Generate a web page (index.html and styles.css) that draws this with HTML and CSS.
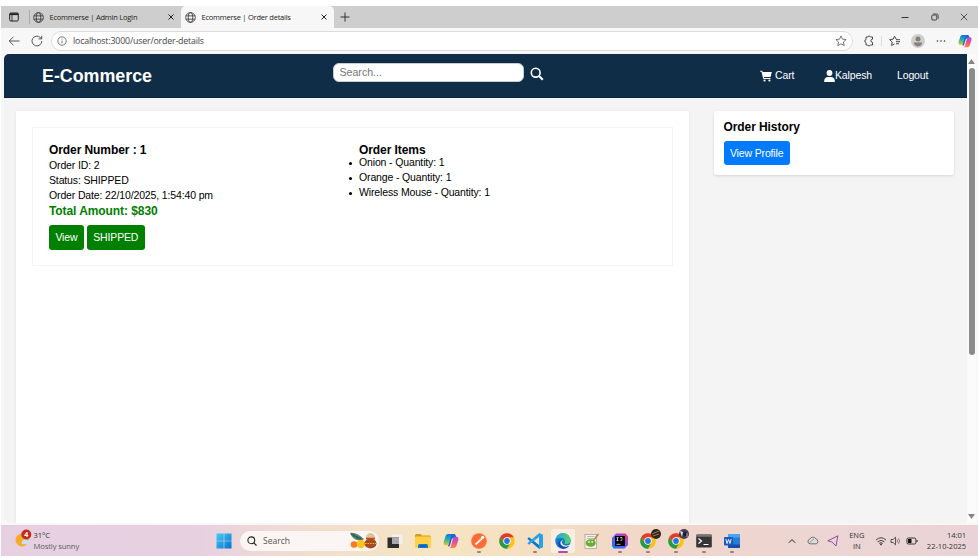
FILE: index.html
```html
<!DOCTYPE html>
<html lang="en">
<head>
<meta charset="utf-8">
<title>Ecommerse | Order details</title>
<link rel="stylesheet" href="styles.css">
</head>
<body>
<svg class="defs" width="0" height="0">
  <defs>
    <linearGradient id="win" x1="0" y1="0" x2="1" y2="1"><stop offset="0" stop-color="#45ccf8"/><stop offset="1" stop-color="#0672cf"/></linearGradient>
    <linearGradient id="copA" x1="0" y1="0" x2="0" y2="1"><stop offset="0" stop-color="#176fe8"/><stop offset=".5" stop-color="#21b5a5"/><stop offset="1" stop-color="#f3c51d"/></linearGradient>
    <linearGradient id="copB" x1="0" y1="0" x2="0" y2="1"><stop offset="0" stop-color="#a34bea"/><stop offset=".5" stop-color="#ee4d91"/><stop offset="1" stop-color="#ff8a43"/></linearGradient>
    <linearGradient id="edgeTop" x1="0" y1="0" x2="1" y2="0"><stop offset="0" stop-color="#229fe0"/><stop offset="1" stop-color="#59d568"/></linearGradient>
    <linearGradient id="ij" x1="0" y1="1" x2="1" y2="0"><stop offset="0" stop-color="#087cfa"/><stop offset=".5" stop-color="#6b57ff"/><stop offset="1" stop-color="#fe2e6d"/></linearGradient>
    <symbol id="globe" viewBox="0 0 12 12"><g fill="none" stroke="#333" stroke-width=".9"><circle cx="6" cy="6" r="5.300"/><ellipse cx="6" cy="6" rx="2.400" ry="5.300"/><path d="M1.200 4.200h9.600M1.200 7.800h9.600"/></g></symbol>
    <symbol id="close" viewBox="0 0 8 8"><path d="M1.500 1.500l5 5M6.500 1.500l-5 5" stroke="#222" stroke-width="1" fill="none"/></symbol>
    <symbol id="copilot" viewBox="0 0 16 16">
      <path d="M5.500 1H11c1 0 1.500.7 1.700 1.500L13.300 5H10.600C9.500 5 9 5.500 8.700 6.600L7 12.200C6.700 13 6 13.500 5.200 13.500" fill="#1765d8"/>
      <path d="M5.200 1H10C8.800 1 8.300 2 8 3L5.900 10.700C5.600 11.700 5 12.300 4 12.300H2.500C.8 12.300.2 10.800.7 9L2.600 3C3 1.700 3.900 1 5.200 1z" fill="url(#copA)"/>
      <path d="M10.800 15H6C7.200 15 7.700 14 8 13L10.100 5.300C10.400 4.300 11 3.700 12 3.700H13.500C15.200 3.700 15.800 5.200 15.300 7L13.400 13C13 14.300 12.100 15 10.800 15z" fill="url(#copB)"/>
    </symbol>
    <symbol id="chrome" viewBox="0 0 16 16">
      <circle cx="8" cy="8" r="7.800" fill="#fbc116"/>
      <path d="M1.250 4.100A7.800 7.800 0 0 0 8 15.800L11.200 9.900 8 8 4.800 9.900z" fill="#249b49"/>
      <path d="M1.250 4.100A7.800 7.800 0 0 1 14.750 4.250H8L4.700 9z" fill="#e33b2e"/>
      <circle cx="8" cy="8" r="3.700" fill="#fff"/><circle cx="8" cy="8" r="2.900" fill="#2675e8"/>
    </symbol>
  </defs>
</svg>

<div class="screen">
  <div class="tabstrip">
    <svg class="tab-menu" viewBox="0 0 10 10"><rect x=".7" y="1" width="8.600" height="8" rx="1.200" fill="none" stroke="#222"/><path d="M.7 2.200h8.600" stroke="#222" stroke-width="1.800"/><path d="M3 2v7" stroke="#222" stroke-width=".8"/></svg>
    <div class="tab tab-first">
      <svg class="globe"><use href="#globe"/></svg><span class="tab-title">Ecommerse | Admin LogIn</span><svg class="close"><use href="#close"/></svg>
    </div>
    <div class="tab tab-active">
      <svg class="globe"><use href="#globe"/></svg><span class="tab-title">Ecommerse | Order details</span><svg class="close"><use href="#close"/></svg>
    </div>
    <svg class="new-tab" viewBox="0 0 10 10"><path d="M5 .5v9M.5 5h9" stroke="#333" fill="none"/></svg>
    <div class="window-controls">
      <svg viewBox="0 0 8 8"><path d="M.5 4.500h7" stroke="#333"/></svg>
      <svg viewBox="0 0 8 8"><rect x=".8" y="2" width="5" height="5" rx="1" fill="none" stroke="#333" stroke-width=".9"/><path d="M2.200 1h3.500a1.500 1.500 0 0 1 1.500 1.500v3.300" fill="none" stroke="#333" stroke-width=".8"/></svg>
      <svg viewBox="0 0 8 8"><path d="M.8.8l6.400 6.400M7.200.8L.8 7.200" stroke="#333" stroke-width=".8"/></svg>
    </div>
  </div>

  <div class="toolbar">
    <svg class="back" viewBox="0 0 12 12"><path d="M11.500 6H1.200M5.500 1.700L1.200 6l4.300 4.300" fill="none" stroke="#444" stroke-width=".9"/></svg>
    <svg class="reload" viewBox="0 0 12 12"><path d="M10.800 6a4.900 4.900 0 1 1-1.500-3.500L10.500 3.700M10.700.8v3.100H7.600" fill="none" stroke="#444" stroke-width=".9"/></svg>
    <div class="address">
      <svg class="info" viewBox="0 0 10 10"><circle cx="5" cy="5" r="4.200" fill="none" stroke="#555" stroke-width=".8"/><path d="M5 4.500v2.800M5 2.700v.9" stroke="#555" stroke-width=".8"/></svg>
      <span class="url">localhost:3000/user/order-details</span>
      <svg class="star" viewBox="0 0 12 12"><path d="M6 .9l1.500 3.300 3.600.4-2.700 2.400.8 3.600L6 8.800l-3.200 1.800.8-3.600L.9 4.600l3.600-.4z" fill="none" stroke="#555" stroke-width=".8" stroke-linejoin="round"/></svg>
    </div>
    <div class="tools">
      <svg class="puzzle" viewBox="0 0 12 12"><path d="M3 2h1.700a1.500 1.500 0 0 1 2.800 0H9.500v2.200a1.600 1.600 0 1 0 0 3.200V10H7.300a1.500 1.500 0 0 1-2.700 0H3V7.600a1.600 1.600 0 0 1 0-3.100z" fill="none" stroke="#333" stroke-width=".9" stroke-linejoin="round"/></svg>
      <span class="tool-rule"></span>
      <svg class="favs" viewBox="0 0 12 12"><path d="M7.300 4.300L5.500 1.200 4.100 4.200.7 4.700 3.200 7 2.600 10.500 5.500 8.900M7 4.700h4M7 6.700h4M7 8.700h3" fill="none" stroke="#333" stroke-width=".9"/></svg>
      <svg class="avatar" viewBox="0 0 14 14"><circle cx="7" cy="7" r="7" fill="#d1cecb"/><circle cx="7" cy="4.900" r="2.500" fill="#85807b"/><path d="M2.800 8.500h8.400c0 2.300-1.800 3.900-4.200 3.900S2.800 10.800 2.800 8.500z" fill="#85807b"/></svg>
      <svg class="dots" viewBox="0 0 10 4"><g fill="#333"><circle cx="1.500" cy="2" r=".8"/><circle cx="5" cy="2" r=".8"/><circle cx="8.500" cy="2" r=".8"/></g></svg>
      <svg class="side-copilot"><use href="#copilot"/></svg>
    </div>
  </div>

  <div class="viewport">
    <div class="page">
      <header class="navbar">
        <h1>E-Commerce</h1>
        <div class="search"><div class="search-input">Search...</div>
          <svg viewBox="0 0 14 14"><circle cx="5.700" cy="5.700" r="4.400" fill="none" stroke="#fff" stroke-width="1.600"/><path d="M9 9l3.800 3.800" stroke="#fff" stroke-width="2"/></svg>
        </div>
        <nav>
          <a class="cart"><svg viewBox="0 0 12 12"><path d="M.2.700h2l.5 1.300h9.100l-1.300 4.900H3.900l.2 1.100h6.400v1H3.300L1.500 1.700H.2z" fill="#fff"/><circle cx="4.500" cy="10.500" r="1.100" fill="#fff"/><circle cx="9.400" cy="10.500" r="1.100" fill="#fff"/></svg>Cart</a>
          <a class="user"><svg viewBox="0 0 11 12"><circle cx="5.500" cy="3" r="2.900" fill="#fff"/><path d="M.2 12v-1.200C.2 8.400 2 7 4 7h3c2 0 3.800 1.400 3.800 3.800V12z" fill="#fff"/></svg>Kalpesh</a>
          <a class="logout">Logout</a>
        </nav>
      </header>
      <div class="content">
        <main class="orders">
          <article class="order">
            <section class="summary">
              <h3>Order Number : 1</h3>
              <p>Order ID: 2</p>
              <p>Status: SHIPPED</p>
              <p>Order Date: 22/10/2025, 1:54:40 pm</p>
              <h3 class="total">Total Amount: $830</h3>
              <div class="actions"><span class="btn">View</span><span class="btn">SHIPPED</span></div>
            </section>
            <section class="items">
              <h3>Order Items</h3>
              <ul><li>Onion - Quantity: 1</li><li>Orange - Quantity: 1</li><li>Wireless Mouse - Quantity: 1</li></ul>
            </section>
          </article>
        </main>
        <aside class="history"><h3>Order History</h3><span class="btn blue">View Profile</span></aside>
      </div>
    </div>
    <div class="scrollbar">
      <svg viewBox="0 0 7 5"><path d="M3.500 0L7 5H0z" fill="#858585"/></svg>
      <span class="thumb"></span>
      <svg class="down" viewBox="0 0 7 5"><path d="M0 0h7L3.500 5z" fill="#858585"/></svg>
    </div>
  </div>

  <footer class="taskbar">
    <div class="weather">
      <svg viewBox="0 0 17 18"><circle cx="7" cy="11" r="6.500" fill="#f7a928"/><path d="M7.500 15.300a2 2 0 0 1 0-3.500 3 3 0 0 1 5-.4 2 2 0 0 1 .8 3.900z" fill="#c9ddf8"/><circle cx="11.300" cy="5.500" r="5" fill="#c42b1c"/><text x="11.300" y="8" text-anchor="middle" class="badge-text">4</text></svg>
      <div class="weather-text"><span>31°C</span><span class="muted">Mostly sunny</span></div>
    </div>
    <svg class="start" viewBox="0 0 16 16"><path d="M.5.500h7.200v7.200H.5zM8.300.500h7.200v7.200H8.300zM.5 8.300h7.200v7.200H.5zM8.300 8.300h7.200v7.200H8.300z" fill="url(#win)"/></svg>
    <div class="task-search">
      <svg class="lens" viewBox="0 0 10 10"><circle cx="4.300" cy="4.300" r="3.400" fill="none" stroke="#222" stroke-width="1.100"/><path d="M6.800 6.800L9.500 9.500" stroke="#222" stroke-width="1.200"/></svg>
      <span>Search</span>
      <svg class="festive" viewBox="0 0 28 17"><path d="M1 1C6 0 10 3 15 7L13 8.500C7 9 3 6 1 1z" fill="#578571"/><path d="M2 2l11 5.500M5 2v3M8 4v3M11 5v3" stroke="#234e56" stroke-width=".8"/><circle cx="5" cy="12.500" r="3.300" fill="#f57b22"/><circle cx="12" cy="12" r="4.200" fill="#ffc51a"/><ellipse cx="21.500" cy="11.500" rx="6" ry="5" fill="#a84d1e"/><path d="M17 5.500a4.500 4.500 0 0 1 9 0z" fill="#e0c394"/><path d="M17 6.500h9" stroke="#c04920" stroke-width="1.800"/><path d="M16 11.500h11" stroke="#f0b34a" stroke-width="1.200" stroke-dasharray="1.500 1"/></svg>
    </div>
    <div class="apps">
      <div class="app"><svg viewBox="0 0 16 16"><path d="M5 1.500h10.500v9.500H5z" fill="#f2f1ef"/><path d="M.5 4.500h11.500v10.500H.5z" fill="#2d2d2d"/><path d="M5 4.500h7v6.500H5z" fill="#aaa"/></svg></div>
      <div class="app"><svg viewBox="0 0 16 16"><path d="M0 2.500Q0 1 1.500 1h4l1.500 1.500h7.500Q16 2.500 16 4v3H0z" fill="#d89c14"/><rect y="3.600" width="16" height="11.400" rx="1" fill="#ffcf48"/><path d="M3 15v-2.500q0-1.500 1.500-1.500h7q1.500 0 1.500 1.500V15z" fill="#1479d1"/><path d="M5 13h6" stroke="#0b4d91"/></svg></div>
      <div class="app"><svg><use href="#copilot"/></svg></div>
      <div class="app running"><svg viewBox="0 0 16 16"><circle cx="8" cy="8" r="7.800" fill="#ff6c37"/><path d="M4.500 11.500L10.500 5.800 12 4" stroke="#fff" stroke-width="1.800" fill="none"/><circle cx="11.700" cy="4.200" r="1.500" fill="#fff"/><path d="M5.500 9.500l5-4" stroke="#ffb092" stroke-width=".6"/></svg></div>
      <div class="app"><svg><use href="#chrome"/></svg></div>
      <div class="app running"><svg viewBox="0 0 16 16"><path d="M12 .2L16 2v12l-4 1.800L.3 5.800 2 4.300 12 12z" fill="#0878c2"/><path d="M12 .2L16 2v12l-4 1.800V4L2 11.700.3 10.200z" fill="#24a2ec"/></svg></div>
      <div class="app selected"><svg viewBox="0 0 16 16"><circle cx="8" cy="8" r="7.700" fill="#1278d2"/><path d="M.3 8A7.700 7.700 0 0 1 15.700 7.500C15.700 10 13.500 11 11.500 11c-1.500 0-2.500-.7-2-1.600C11 7 8.500 5 5.700 5 3 5 1 6.200.3 8z" fill="url(#edgeTop)"/><path d="M7 6.500c-4 2-1.500 7.500 3 7.500 1.800 0 3.200-.5 4.300-1.500C12.800 15 10.500 15.700 8 15.700 2 14.500 2 8 7 6.500z" fill="#0a4b9b"/><path d="M8 7C5.500 9 7.500 12.500 11 12.500c1.700 0 3-.4 4-1l-.6 1.100C11.500 15 5 13.500 5.600 9.300 5.900 8 7 7 8 7z" fill="#f9eee1"/></svg></div>
      <div class="app"><svg viewBox="0 0 16 16"><rect x="1" y="1.500" width="11.500" height="14" fill="#f3f3e8" stroke="#999" stroke-width=".7"/><path d="M3 3.500h7.500M3 5.500h7.500" stroke="#aaa" stroke-width=".8"/><ellipse cx="6.700" cy="10" rx="5" ry="3.800" fill="#68ad32"/><circle cx="5" cy="9" r="1" fill="#e5efc5"/><circle cx="8.200" cy="9" r="1" fill="#e5efc5"/><path d="M9 8l5.500-7" stroke="#b38136" stroke-width="1.300"/></svg></div>
      <div class="app running"><svg viewBox="0 0 16 16"><path d="M4 .5h9.500L16 3.500V12l-3.500 3.500H1.500L0 13V5z" fill="url(#ij)"/><path d="M3 3h10v10H3z" fill="#000"/><path d="M4.500 4.600h2M5.500 4.600v3M4.500 7.600h2M8 4.600h2v2.300q0 .8-1.500.7M4.500 11.300h4" stroke="#fff" stroke-width=".7" fill="none"/></svg></div>
      <div class="app running"><svg><use href="#chrome"/></svg><svg class="profile-badge" viewBox="0 0 10 10"><circle cx="5" cy="5" r="5" fill="#302720"/><path d="M1 5l7-3M2 7l6-2" stroke="#9b793f"/></svg></div>
      <div class="app running"><svg><use href="#chrome"/></svg><svg class="profile-badge" viewBox="0 0 10 10"><circle cx="5" cy="5" r="5" fill="#453b50"/><path d="M1 2l3 1-1 5" fill="#e7dbf1"/><circle cx="6" cy="5" r="2" fill="#1b1a29"/><path d="M8 4v4" stroke="#b6a0c8"/></svg></div>
      <div class="app running"><svg viewBox="0 0 16 16"><rect x=".2" y="1.500" width="15.600" height="13" rx="1" fill="#353535"/><path d="M.2 3.700V2.500q0-1 1-1h13.600q1 0 1 1v1.200z" fill="#777"/><path d="M2.500 5.500L5.500 8l-3 2.500M7.500 11.500h5" stroke="#fff" stroke-width="1.200" fill="none"/></svg></div>
      <div class="app running"><svg viewBox="0 0 16 16"><rect x="4" y="1" width="12" height="14" rx="1" fill="#2b7cd3"/><path d="M4 1.500q0-.5 1-.5h10q1 0 1 1v2.500H4z" fill="#45a6ed"/><path d="M4 11.500h12V14q0 1-1 1H5q-1 0-1-1z" fill="#164fa5"/><rect y="4" width="9" height="8.500" rx="1" fill="#185abd"/><path d="M1.800 6l1.200 4.500L4.500 6.500 6 10.500 7.200 6" stroke="#fff" stroke-width=".9" fill="none"/></svg></div>
    </div>
    <div class="tray">
      <svg class="chev" viewBox="0 0 8 6"><path d="M.8 4.800L4 1.600l3.200 3.200" stroke="#222" fill="none"/></svg>
      <svg class="cloud" viewBox="0 0 12 9"><path d="M3 7.800a2.400 2.400 0 0 1-.2-4.700A3.500 3.500 0 0 1 9 3a2.500 2.500 0 0 1 .2 4.800z" fill="#ddd" stroke="#555" stroke-width=".8"/><path d="M2.500 6.500L7 3" stroke="#999"/></svg>
      <svg class="loc" viewBox="0 0 12 12"><path d="M10.800.8L.8 5.800l4.400 1.300L9 11z" fill="none" stroke="#7d3ca8" stroke-width=".9" stroke-linejoin="round"/></svg>
      <div class="lang">ENG<br>IN</div>
      <svg class="wifi" viewBox="0 0 12 10"><g fill="none" stroke="#333" stroke-width=".9"><path d="M1 4q5-4.500 10 0M2.600 5.800q3.400-3 6.800 0M4.200 7.400q1.800-1.500 3.600 0"/></g><circle cx="6" cy="8.400" r=".9" fill="#333"/></svg>
      <svg class="vol" viewBox="0 0 12 10"><path d="M1 3.500h2L5.500 1.200v7.600L3 6.500H1z" fill="none" stroke="#333" stroke-width=".8"/><path d="M7 3.500q1.200 1.500 0 3M8.500 2.300q2 2.700 0 5.400" fill="none" stroke="#555" stroke-width=".7"/></svg>
      <svg class="bat" viewBox="0 0 12 8"><rect x=".9" y="1" width="9" height="6" rx="1.500" fill="none" stroke="#222" stroke-width=".9"/><path d="M2 2h3.500v4H2z" fill="#111"/><path d="M11 3v2" stroke="#222"/></svg>
      <div class="clock">14:01<br>22-10-2025</div>
    </div>
  </footer>
</div>
</body>
</html>
```
FILE: styles.css
```css
* { box-sizing: border-box; }
body { margin: 0; background: #fff; overflow: hidden; }
svg { display: block; flex: none; overflow: visible; }
h1, h3, p, ul { margin: 0; padding: 0; }
.defs { position: absolute; }
.screen {
  width: 978px; height: 558px; padding: 6px 0 2px 1px;
  display: flex; flex-direction: column;
  font-family: "Open Sans", "Noto Sans", sans-serif;
}

/* Browser tabs */
.tabstrip { height: 22px; flex: none; display: flex; align-items: center; background: #cecece; }
.tab-menu { width: 10px; height: 10px; margin-left: 8px; }
.tab { display: flex; align-items: center; height: 22px; padding-left: 4px; }
.tab-first { width: 152px; margin-left: 10px; padding-left: 3px; border-left: 1px solid #aaa; height: 14px; }
.tab-active { width: 153px; background: #f7f7f7; border-radius: 5px 5px 0 0; }
.globe { width: 11px; height: 11px; }
.tab-title { font-size: 7.500px; letter-spacing: -.23px; line-height: 12px; color: #222; margin: -1px 0 0 5.500px; white-space: nowrap; flex: 1; }
.close { width: 8px; height: 8px; margin-right: 6px; }
.new-tab { width: 10px; height: 10px; margin-left: 6px; }
.window-controls { margin-left: auto; margin-right: 10px; display: flex; gap: 21.500px; }
.window-controls svg { width: 8px; height: 8px; }

/* Address row */
.toolbar { height: 25px; flex: none; display: flex; align-items: center; background: #f7f7f7; }
.back { width: 12px; height: 12px; margin-left: 7px; }
.reload { width: 12px; height: 12px; margin-left: 11px; }
.address {
  width: 802px; height: 20px; margin-left: 8px; padding: 0 5px;
  display: flex; align-items: center; background: #fff; border: 1px solid #ddd; border-radius: 10px;
}
.info { width: 10px; height: 10px; }
.url { flex: 1; margin-left: 6px; font-size: 8.800px; letter-spacing: -.17px; line-height: 14px; color: #444; }
.star { width: 12px; height: 12px; }
.tools { flex: 1; display: flex; align-items: center; }
.puzzle { width: 12px; height: 12px; margin-left: 10px; }
.tool-rule { width: 1px; height: 10px; background: #ddd; margin-left: 6px; }
.favs { width: 12px; height: 12px; margin-left: 7px; }
.avatar { width: 14px; height: 14px; margin-left: 10px; }
.dots { width: 10px; height: 4px; margin-left: 11px; }
.side-copilot { width: 14px; height: 14px; margin-left: 12px; }

/* Web page */
.viewport { height: 472px; flex: none; background: #f7f7f7; padding: 1px 0 2px 3px; display: flex; }
.page {
  width: 963px; height: 469px; overflow: hidden; background: #f4f4f4;
  border-radius: 5px 0 0 5px; font: 10.500px/15.100px "Liberation Sans", sans-serif; letter-spacing: -.14px; color: #000;
}
.navbar { height: 44px; background: #102d48; color: #fff; display: flex; align-items: center; border-bottom: 1px solid #0a2240; }
h1 { width: 290.500px; margin-left: 38px; font-size: 17.830px; line-height: 22px; letter-spacing: 0; }
.search { display: flex; width: 427.500px; align-items: center; }
.search-input {
  width: 191px; height: 19px; margin: -6px 0 0; padding: 0 6px; background: #fff; border: 1px solid #c7ccd2;
  border-radius: 6px; color: #757575; font-size: 10.600px; line-height: 17px; letter-spacing: 0;
}
.search svg { width: 14px; height: 14px; margin: -3px 0 0 6.500px; }
nav { display: flex; }
nav a { display: flex; align-items: center; }
.cart { width: 64px; }
.cart svg { width: 12px; height: 12px; margin-right: 3px; }
.user { width: 73px; }
.user svg { width: 11px; height: 12px; }
.content { display: flex; align-items: flex-start; padding: 13px 0 0 12px; gap: 25px; }
.orders { width: 673px; height: 440px; background: #fff; padding: 16px; box-shadow: 0 0 3px rgba(0,0,0,.08); }
.order { height: 139px; width: 641px; border: 1px solid #f4f4f4; padding: 14.500px 16px 16px; display: flex; }
.summary { width: 310px; }
h3 { font-size: 12px; line-height: 14.500px; letter-spacing: -.08px; }
.summary h3 { line-height: 15.500px; }
.summary .total { color: #008000; line-height: 16px; }
.actions { display: flex; gap: 3px; margin-top: 6px; }
.btn { display: inline-block; background: #008000; color: #fff; padding: 0 6.400px; line-height: 24.500px; border-radius: 3px; }
.items ul { margin-top: -3px; list-style: none; }
.items li { display: flex; align-items: center; }
.items li::before { content: ""; width: 3px; height: 3px; margin: 1px 7px 0 -10px; border-radius: 50%; background: #000; }
.items h3 { line-height: 15.500px; }
.history { width: 240px; height: 64px; padding: 9px 9.500px; background: #fff; border-radius: 3px; box-shadow: 0 1px 3px rgba(0,0,0,.13); }
.history .btn { margin-top: 6px; background: #007bff; }
.scrollbar { width: 10px; height: 469px; background: #fbfbfb; display: flex; flex-direction: column; align-items: center; padding: 5px 1px 4px 0; border-radius: 0 4px 5px 0; }
.scrollbar svg { width: 7px; height: 5px; }
.thumb { width: 6px; height: 287px; margin-top: 4px; background: #8b8b8b; border-radius: 3px; }
.down { margin-top: auto; }

/* Taskbar */
.taskbar {
  height: 31px; flex: none; display: flex; align-items: center; color: #333;
  background: linear-gradient(90deg, #e5cfe1 0, #e7d1e0 200px, #f0ddd0 300px, #f6e5c2 430px, #f5dfc3 530px, #f0d6ca 660px, #edd5d2 800px, #e9d3d7 100%);
}
.weather { width: 215px; display: flex; align-items: center; padding-left: 14px; }
.weather svg { width: 17px; height: 18px; margin-top: -5px; }
.badge-text { font: bold 7px "Open Sans", sans-serif; fill: #fff; }
.weather-text { display: flex; flex-direction: column; font-size: 7.600px; letter-spacing: -.1px; line-height: 10.300px; margin-left: 1.500px; }
.muted { color: #625b66; }
.start { width: 16px; height: 16px; }
.task-search { width: 139px; height: 20px; margin-left: 8px; padding-left: 7px; border-radius: 10px; background: #fbf5f4; display: flex; align-items: center; }
.lens { width: 10px; height: 10px; }
.task-search span { font-size: 8.500px; margin-left: 6px; color: #555; flex: 1; }
.festive { width: 28px; height: 17px; margin-right: 2px; }
.apps { display: flex; width: 366px; margin-left: 1.800px; }
.app { width: 28.100px; height: 31px; position: relative; display: grid; place-items: center; }
.app > svg { width: 16px; height: 16px; }
.running::after { content: ""; position: absolute; bottom: 3px; left: 12px; width: 4px; height: 2px; border-radius: 1px; background: #8d8580; }
.selected::before { content: ""; position: absolute; left: 2px; top: 4px; width: 24px; height: 24px; border-radius: 3px; background: #faeee3; }
.selected > svg { position: relative; }
.selected::after { content: ""; position: absolute; bottom: 3px; left: 9px; width: 10px; height: 2px; border-radius: 1px; background: #b146c2; }
.app > .profile-badge { position: absolute; width: 10px; height: 10px; top: 4px; right: 1px; }
.tray { flex: 1; display: flex; align-items: center; margin-left: 41px; font-size: 7.500px; line-height: 10.300px; }
.chev { width: 8px; height: 6px; }
.cloud { width: 12px; height: 9px; margin-left: 11px; }
.loc { width: 12px; height: 12px; margin-left: 8px; }
.lang { width: 22px; margin-left: 7px; text-align: center; }
.wifi { width: 12px; height: 10px; margin-left: 7px; }
.vol { width: 12px; height: 10px; margin-left: 3px; }
.bat { width: 12px; height: 8px; margin-left: 4px; }
.clock { margin-left: auto; margin-right: 12px; text-align: right; }
```
